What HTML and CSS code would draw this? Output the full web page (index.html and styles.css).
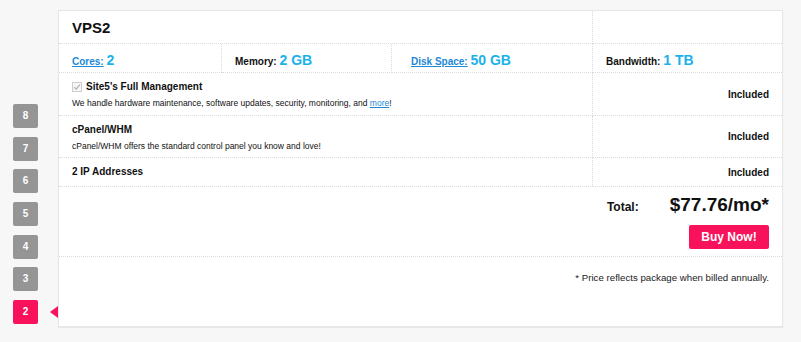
FILE: index.html
```html
<!doctype html>
<html lang="en">
  <head>
    <meta charset="UTF-8" />
    <title>VPS2 - Plan Details</title>
    <link rel="stylesheet" href="styles.css">
  </head>
  <body>
    <div class="page">
      <nav class="steps">
        <a class="step" href="#">8</a>
        <a class="step" href="#">7</a>
        <a class="step" href="#">6</a>
        <a class="step" href="#">5</a>
        <a class="step" href="#">4</a>
        <a class="step" href="#">3</a>
        <a class="step active" href="#">2</a>
      </nav>

      <div class="plan">
        <div class="cell plan-title span3"><h2>VPS2</h2></div>
        <div class="cell side"></div>

        <div class="cell spec"><a href="#">Cores:</a> <span class="val">2</span></div>
        <div class="cell spec">Memory: <span class="val">2 GB</span></div>
        <div class="cell spec disk"><a href="#">Disk Space:</a> <span class="val">50 GB</span></div>
        <div class="cell spec side-spec">Bandwidth: <span class="val">1 TB</span></div>

        <div class="cell feature span3">
          <div class="feature-name">
            <svg class="check" width="10" height="10" viewBox="0 0 10 10">
              <rect x="0.5" y="0.5" width="9" height="9" fill="#f6f6f6" stroke="#cfcfcf" />
              <path d="M2.2 5.2 L4.2 7.1 L7.9 2.6" fill="none" stroke="#b4b4b4" stroke-width="1.3" />
            </svg>
            Site5's Full Management
          </div>
          <p>We handle hardware maintenance, software updates, security, monitoring, and <a href="#">more</a>!</p>
        </div>
        <div class="cell side">Included</div>

        <div class="cell feature span3">
          <div class="feature-name">cPanel/WHM</div>
          <p>cPanel/WHM offers the standard control panel you know and love!</p>
        </div>
        <div class="cell side">Included</div>

        <div class="cell feature span3">
          <div class="feature-name">2 IP Addresses</div>
        </div>
        <div class="cell side">Included</div>

        <div class="cell total span4">
          <div class="total-line">
            <span class="total-label">Total:</span>
            <span class="price">$77.76/mo*</span>
          </div>
          <a class="buy" href="#">Buy Now!</a>
        </div>

        <div class="cell note span4">* Price reflects package when billed annually.</div>
      </div>
    </div>
  </body>
</html>
```

FILE: styles.css
```css
body {
  margin: 0;
  background: #f7f7f7;
  font-family: 'Liberation Sans', Arial, sans-serif;
  color: #111;
}

.page {
  display: flex;
  padding-top: 10px;
  height: 342px;
  box-sizing: border-box;
}

/* step list on the left */
.steps {
  width: 58px;
  box-sizing: border-box;
  padding: 0 0 18px 13px;
  display: flex;
  flex-direction: column;
  justify-content: flex-end;
  gap: 8.67px;
}

.step {
  position: relative;
  display: block;
  width: 25px;
  height: 24px;
  line-height: 24px;
  text-align: center;
  background: #959595;
  color: white;
  font-size: 10px;
  font-weight: bold;
  text-decoration: none;
  border-radius: 2px;
}

.step.active {
  background: #f7125b;
}

.step.active::after {
  content: '';
  position: absolute;
  left: 37px;
  top: 5.5px;
  border-right: 8px solid #f7125b;
  border-top: 6.5px solid transparent;
  border-bottom: 6.5px solid transparent;
}

/* plan card */
.plan {
  width: 725px;
  height: 317px;
  box-sizing: border-box;
  background: white;
  border: 1px solid #e6e6e6;
  box-shadow: 0 1px 1px rgba(0, 0, 0, 0.06);
  display: grid;
  grid-template-columns: 163px 170px 201px 1fr;
  grid-template-rows: 33px 29px 43px 42px 29px 70px 1fr;
}

.cell {
  box-sizing: border-box;
  border-bottom: 1px dotted #dadada;
  padding: 0 13px;
}

.span3 {
  grid-column: span 3;
  border-right: 1px dotted #dadada;
}

.span4 {
  grid-column: span 4;
}

.plan-title {
  display: flex;
  align-items: center;
}

.plan-title h2 {
  margin: 0;
  font-size: 15px;
}

.spec {
  padding-top: 5px;
  line-height: 22px;
  font-size: 10px;
  font-weight: bold;
  white-space: nowrap;
}

.spec:not(.side-spec) {
  border-right: 1px dotted #dadada;
}

.spec.disk {
  padding-left: 19px;
}

.spec a {
  color: #2188d6;
}

.val {
  font-size: 14px;
  color: #1bb1e9;
}

.feature {
  padding-top: 8px;
}

.feature-name {
  display: flex;
  align-items: center;
  font-size: 10px;
  font-weight: bold;
  line-height: 12px;
}

.check {
  margin: 0 4px 0 0;
}

.feature p {
  margin: 4px 0 0;
  font-size: 8.5px;
  line-height: 12px;
}

.feature p a {
  color: #2188d6;
}

.side {
  display: flex;
  align-items: center;
  justify-content: flex-end;
  font-size: 10px;
  font-weight: bold;
}

.total {
  display: flex;
  flex-direction: column;
  align-items: flex-end;
  padding-top: 7px;
}

.total-line {
  display: flex;
  align-items: baseline;
  gap: 31px;
  line-height: 22px;
}

.total-label {
  font-size: 12px;
  font-weight: bold;
}

.price {
  font-size: 19px;
  font-weight: bold;
}

.buy {
  margin-top: 7px;
  width: 80px;
  height: 24px;
  line-height: 24px;
  text-align: center;
  background: #f7125b;
  color: white;
  font-size: 12px;
  font-weight: bold;
  text-decoration: none;
  border-radius: 2px;
}

.note {
  border-bottom: none;
  text-align: right;
  padding-top: 14px;
  font-size: 9.7px;
  line-height: 14px;
  color: #222;
}
```
